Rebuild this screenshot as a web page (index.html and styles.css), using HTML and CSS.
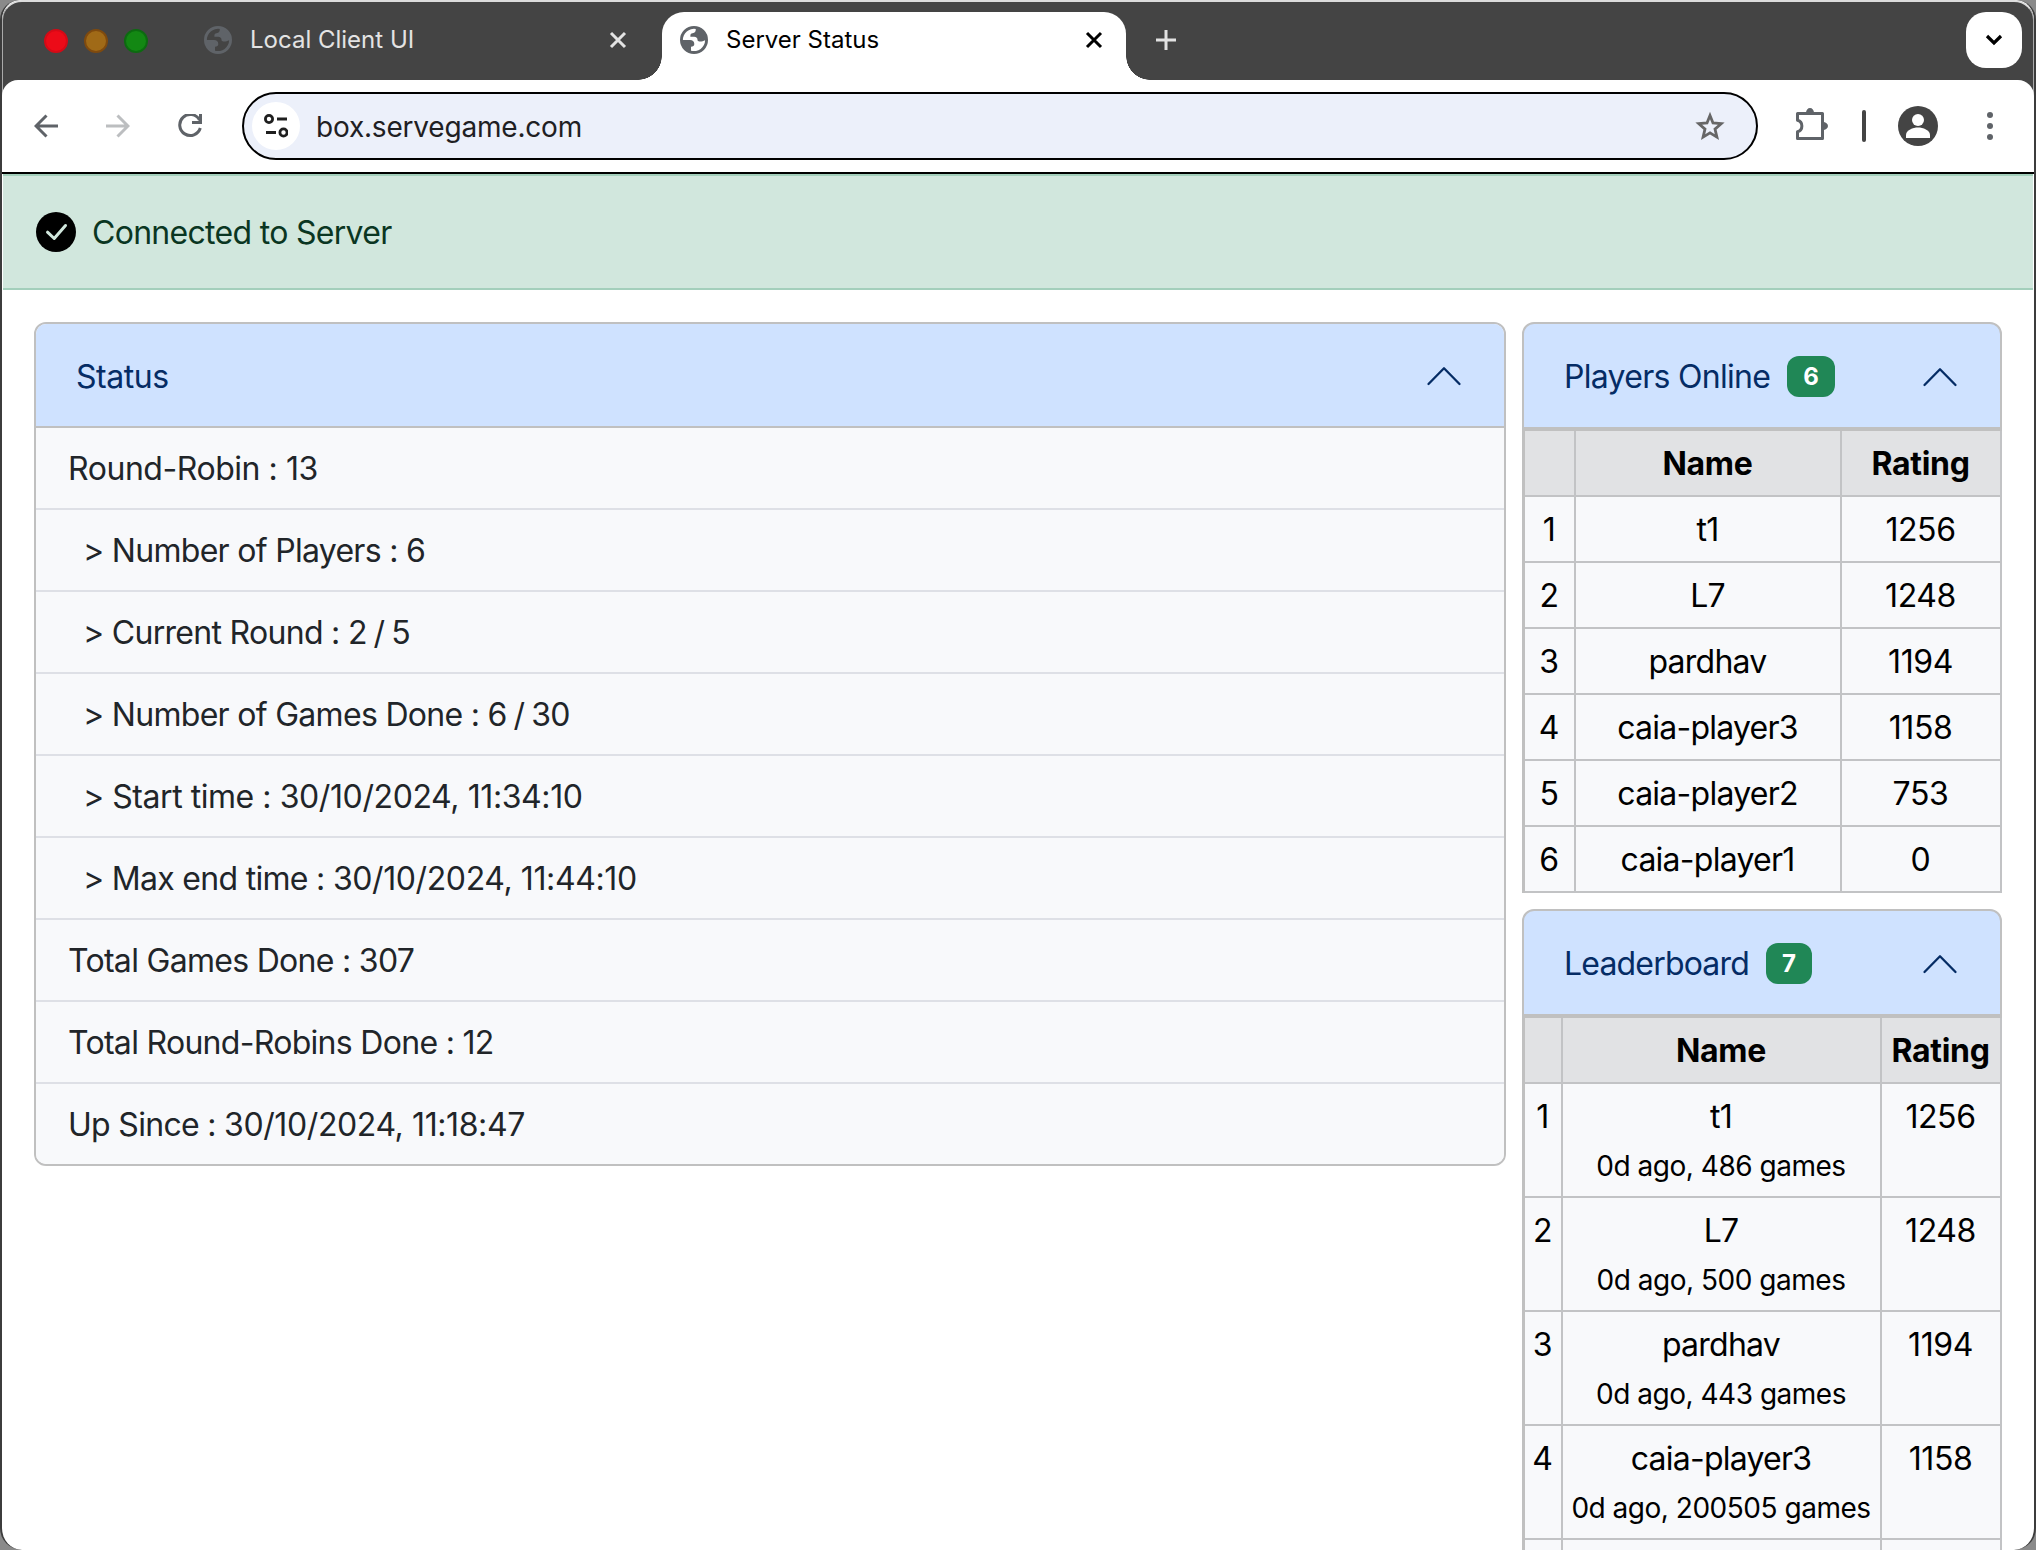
FILE: index.html
```html
<!DOCTYPE html>
<html lang="en">
<head>
<meta charset="utf-8">
<title>Server Status</title>
<link rel="stylesheet" href="styles.css">
</head>
<body>
<svg class="sprite" width="0" height="0">
  <symbol id="globe" viewBox="0 0 28 28">
    <path fill="currentColor" fill-rule="evenodd" d="M14 0a14 14 0 1 0 0 28 14 14 0 0 0 0-28ZM2.900 14A11.100 11.100 0 0 1 15.800 3C15.800 5.500 15 7 12.500 7.300 10.800 7.500 10.200 8.600 10.400 10.800H14C16.500 10.800 17.600 12 17.600 14.500 18.500 16 22 16 25.100 14.200A11.100 11.100 0 0 1 11 24.700V20.800C13 20.800 14.300 19.800 14.300 18 14.300 15.300 12.500 14 10 14Z"/>
  </symbol>
  <symbol id="chevron-up" viewBox="0 0 36 22">
    <path fill="none" stroke="currentColor" stroke-width="2.300" stroke-linecap="round" stroke-linejoin="round" d="M2.500 19 18 3.200 33.500 19"/>
  </symbol>
</svg>
<div class="window">
  <header class="tabs">
    <div class="lights"><i class="red"></i><i class="amber"></i><i class="green"></i></div>
    <div class="tab idle">
      <svg class="globe" viewBox="0 0 28 28"><use href="#globe"/></svg>
      <span class="title">Local Client UI</span>
      <svg class="close" viewBox="0 0 18 18"><path d="M2 2l14 14M16 2 2 16"/></svg>
    </div>
    <div class="tab active">
      <svg class="globe" viewBox="0 0 28 28"><use href="#globe"/></svg>
      <span class="title">Server Status</span>
      <svg class="close" viewBox="0 0 18 18"><path d="M2 2l14 14M16 2 2 16"/></svg>
    </div>
    <svg class="plus" viewBox="0 0 20 20"><path d="M10 0v20M0 10h20"/></svg>
    <div class="tab-menu"><svg viewBox="0 0 18 12"><path d="M2 2l7 7 7-7"/></svg></div>
  </header>

  <nav class="toolbar">
    <svg class="nav back" viewBox="0 0 24 24"><path d="M24 12H2M12.500 1.500 2 12l10.500 10.500"/></svg>
    <svg class="nav forward" viewBox="0 0 24 24"><path d="M0 12h22M11.500 1.500 22 12 11.500 22.500"/></svg>
    <svg class="nav reload" viewBox="0 0 24 24"><path d="M21.500 6A10.500 10.500 0 1 0 22.300 14M22.500 0v8.500H14"/></svg>
    <div class="omnibox">
      <span class="site"><svg viewBox="0 0 24 24"><circle cx="5" cy="5" r="3.600"/><path d="M13 5h10M2 18.500h10"/><circle cx="19.500" cy="18.500" r="3.600"/></svg></span>
      <span class="url">box.servegame.com</span>
      <svg class="star" viewBox="0 0 32 30"><path d="M16 4.500 19 12l8.200.7-6.200 5.400 1.900 8L16 21.800 9.100 26.100l1.900-8L4.800 12.700 13 12Z"/></svg>
    </div>
    <svg class="puzzle" viewBox="0 0 32 32"><path fill="none" stroke="#5f6368" stroke-width="3" stroke-linejoin="round" d="M1.500 5.500h25v25h-25v-6.800a5.900 5.900 0 0 0 0-11.400Z"/><path fill="#5f6368" d="M10 5a4 5 0 0 1 8 0ZM27 14a5 4 0 0 1 0 8Z"/></svg>
    <i class="divider"></i>
    <svg class="avatar" viewBox="0 0 40 40"><circle cx="20" cy="20" r="20" fill="#444"/><circle cx="20" cy="14" r="6" fill="#fff"/><path fill="#fff" d="M8 32v-3c0-5 7-7.500 12-7.500S32 24 32 29v3Z"/></svg>
    <svg class="dots" viewBox="0 0 6 28"><circle cx="3" cy="3" r="3"/><circle cx="3" cy="14" r="3"/><circle cx="3" cy="25" r="3"/></svg>
  </nav>

  <div class="alert">
    <svg class="ok" viewBox="0 0 40 40"><circle cx="20" cy="20" r="20"/><path d="M11.500 20.200 18.200 26.500 29.500 13.500"/></svg>
    <span class="alert-text">Connected to Server</span>
  </div>

  <main class="columns">
    <section class="status">
      <div class="head"><span class="name loose">Status</span><svg class="chev" viewBox="0 0 36 22"><use href="#chevron-up"/></svg></div>
      <ul class="list">
        <li class="loose">Round-Robin : 13</li>
        <li class="sub">&gt; Number of Players : 6</li>
        <li class="sub">&gt; Current Round : <span class="ratio">2 / 5</span></li>
        <li class="sub">&gt; Number of Games Done : <span class="ratio">6 / 30</span></li>
        <li class="sub loose">&gt; Start time : <time>30/10/2024, 11:34:10</time></li>
        <li class="sub">&gt; Max end time : <time>30/10/2024, 11:44:10</time></li>
        <li>Total Games Done : 307</li>
        <li>Total Round-Robins Done : 12</li>
        <li>Up Since : <time>30/10/2024, 11:18:47</time></li>
      </ul>
    </section>
    <aside class="side">
      <section>
        <div class="head boxed"><span class="name">Players Online</span><b class="badge">6</b><svg class="chev" viewBox="0 0 36 22"><use href="#chevron-up"/></svg></div>
        <table class="players">
          <colgroup><col class="c1"><col class="c2"><col class="c3"></colgroup>
          <tr><th></th><th>Name</th><th>Rating</th></tr>
          <tr><td>1</td><td>t1</td><td>1256</td></tr>
          <tr><td>2</td><td>L7</td><td>1248</td></tr>
          <tr><td>3</td><td>pardhav</td><td>1194</td></tr>
          <tr><td>4</td><td>caia-player3</td><td>1158</td></tr>
          <tr><td>5</td><td>caia-player2</td><td>753</td></tr>
          <tr><td>6</td><td>caia-player1</td><td>0</td></tr>
        </table>
      </section>
      <section>
        <div class="head boxed"><span class="name tight">Leaderboard</span><b class="badge">7</b><svg class="chev" viewBox="0 0 36 22"><use href="#chevron-up"/></svg></div>
        <table class="leaders">
          <colgroup><col class="c1"><col class="c2"><col class="c3"></colgroup>
          <tr><th></th><th>Name</th><th>Rating</th></tr>
          <tr><td>1</td><td>t1<br><small>0d ago, 486 games</small></td><td>1256</td></tr>
          <tr><td>2</td><td>L7<br><small>0d ago, 500 games</small></td><td>1248</td></tr>
          <tr><td>3</td><td>pardhav<br><small>0d ago, 443 games</small></td><td>1194</td></tr>
          <tr><td>4</td><td>caia-player3<br><small>0d ago, 200505 games</small></td><td>1158</td></tr>
          <tr><td></td><td></td><td></td></tr>
        </table>
      </section>
    </aside>
  </main>
</div>
</body>
</html>
```
FILE: styles.css
```css
* { box-sizing: border-box; }
html, body { margin: 0; height: 1550px; overflow: hidden; }
body {
  background: #8a8a8a;
  font-family: Inter, "Liberation Sans", sans-serif;
  font-size: 32px;
  line-height: 48px;
  letter-spacing: -0.7px;
  color: #212529;
}
svg { display: block; flex: none; }
.sprite { position: absolute; }
.loose { letter-spacing: -0.45px; }
.tight { letter-spacing: -0.82px; }

.window {
  height: 1550px;
  overflow: hidden;
  background: #fff;
  border: solid #3c3c3c;
  border-width: 0 2px;
  border-radius: 20px 20px 22px 22px;
}

/* tab strip */
.tabs {
  height: 96px;
  margin-bottom: -16px;
  padding: 10px 11px 0 42px;
  display: flex;
  align-items: flex-start;
  background: #444;
  border-top: 2px solid #dcdcdc;
  border-left: 1px solid #aaa;
  border-right: 1px solid #aaa;
  border-radius: 20px 20px 0 0;
}
.lights { display: flex; gap: 16px; padding-top: 17px; margin-left: -1px; }
.lights i { width: 24px; height: 24px; border-radius: 50%; border: 2px solid; }
.lights .red { background: #ec0b18; border-color: #d40a16; }
.lights .amber { background: #a06a17; border-color: #7f4a0e; }
.lights .green { background: #138813; border-color: #0c6b10; }
.tab { height: 68px; display: flex; align-items: center; padding-bottom: 12px; }
.title { font-size: 24px; line-height: 30px; letter-spacing: 0; }
.globe { width: 28px; height: 28px; color: #5f6368; }
.close { width: 18px; height: 18px; fill: none; stroke: #e3e3e3; stroke-width: 3; margin-left: auto; }
.idle { width: 423px; margin-left: 56px; }
.idle .title { color: #e3e3e3; margin-left: 18px; }
.active { position: relative; width: 464px; padding: 0 23px 12px 18px; margin-left: 35px; background: #fff; border-radius: 22px 22px 0 0; }
.active .title { color: #000; margin-left: 18px; }
.active .close { stroke: #000; }
.active::before, .active::after { content: ""; position: absolute; bottom: 0; width: 24px; height: 24px; }
.active::before { left: -24px; background: radial-gradient(circle at 0 0, transparent 23.500px, #fff 24px); }
.active::after { right: -24px; background: radial-gradient(circle at 100% 0, transparent 23.500px, #fff 24px); }
.plus { width: 20px; height: 20px; margin: 18px 0 0 30px; stroke: #e3e3e3; stroke-width: 3; }
.tab-menu { width: 56px; height: 56px; margin-left: auto; display: grid; place-items: center; background: #fff; border-radius: 20px; }
.tab-menu svg { width: 18px; height: 12px; fill: none; stroke: #000; stroke-width: 3.200; }

/* toolbar */
.toolbar {
  position: relative;
  height: 94px;
  padding: 0 41px 0 32px;
  display: flex;
  align-items: center;
  background: #fff;
  border-bottom: 2px solid #000;
  border-radius: 16px 16px 0 0;
}
.nav { width: 24px; height: 24px; fill: none; stroke: #5f6368; stroke-width: 3; margin-right: 48px; }
.forward { stroke: #bcbec0; }
.nav.reload { margin-right: 40px; }
.omnibox {
  width: 1516px;
  height: 68px;
  padding: 0 30px 0 8px;
  display: flex;
  align-items: center;
  background: #ecf0fa;
  border: 2px solid #000;
  border-radius: 34px;
}
.site { width: 48px; height: 48px; display: grid; place-items: center; border-radius: 50%; background: #fff; }
.site svg { width: 24px; height: 24px; fill: none; stroke: #1f1f1f; stroke-width: 2.800; }
.url { margin-left: 16px; padding-top: 1px; font-size: 28px; letter-spacing: -0.2px; color: #1f2023; }
.star { width: 32px; height: 30px; margin-left: auto; fill: none; stroke: #666; stroke-width: 2.800; }
.puzzle { width: 32px; height: 32px; margin: -4px 0 0 38px; }
.divider { width: 4px; height: 32px; margin-left: 34px; border-radius: 2px; background: #444; }
.avatar { width: 40px; height: 40px; margin-left: 32px; }
.dots { width: 6px; height: 28px; margin-left: auto; fill: #5f6368; }

/* alert */
.alert {
  height: 116px;
  margin: 0 1px;
  padding-left: 33px;
  display: flex;
  align-items: center;
  gap: 16px;
  background: #d1e7dd;
  border: solid #a3cfbb;
  border-width: 2px 0;
  color: #0a3622;
}
.alert-text { padding-top: 2px; }
.ok { width: 40px; height: 40px; }
.ok path { fill: none; stroke: #d1e7dd; stroke-width: 3; stroke-linecap: round; stroke-linejoin: round; }

/* content */
.columns {
  display: grid;
  grid-template-columns: 1472px 480px;
  gap: 16px;
  align-items: start;
  padding: 32px 32px 0;
}
.status { border: 2px solid #c0c0c0; border-radius: 12px; overflow: hidden; }
.head {
  height: 104px;
  padding: 2px 42px 0 40px;
  display: flex;
  align-items: center;
  background: #cfe2ff;
  border-bottom: 2px solid #c0c0c0;
  color: #052c65;
}
.name { padding-top: 1px; }
.boxed { height: 109px; border: 2px solid #c0c0c0; border-bottom-width: 4px; border-radius: 12px 12px 0 0; }
.chev { width: 36px; height: 22px; margin-left: auto; }
.badge {
  height: 41px;
  margin-left: 17px;
  padding: 0 16px;
  border-radius: 12px;
  background: #208756;
  color: #fff;
  font-size: 24px;
  line-height: 41px;
  letter-spacing: 0;
}
.list { margin: 0; padding: 0; list-style: none; background: #f8f9fb; }
.list li { height: 82px; padding: 17px 32px 0; border-bottom: 2px solid #dee0e6; }
.list li:last-child { height: 80px; border: 0; }
.list .sub { padding-left: 47px; }
.list time { letter-spacing: -0.4px; }
.ratio { word-spacing: -1.500px; }
.side { display: flex; flex-direction: column; gap: 16px; }
table { width: 480px; table-layout: fixed; border-spacing: 0; border-left: 3px solid #c0c0c0; background: #f8f9fb; color: #000; text-align: center; }
th, td { height: 66px; padding: 9px 1px 0 0; border: solid #c2c3c5; border-width: 0 2px 2px 0; vertical-align: top; white-space: nowrap; letter-spacing: -0.4px; }
th { background: #e1e2e4; font-weight: 700; letter-spacing: -0.3px; }
td:nth-child(2) { letter-spacing: -0.75px; }
.players .c1 { width: 51px; }
.players .c2 { width: 266px; }
.leaders .c1 { width: 38px; }
.leaders .c2 { width: 319px; }
.leaders td { height: 114px; }
small { font-size: 28px; line-height: 40px; letter-spacing: -0.48px; }
```
